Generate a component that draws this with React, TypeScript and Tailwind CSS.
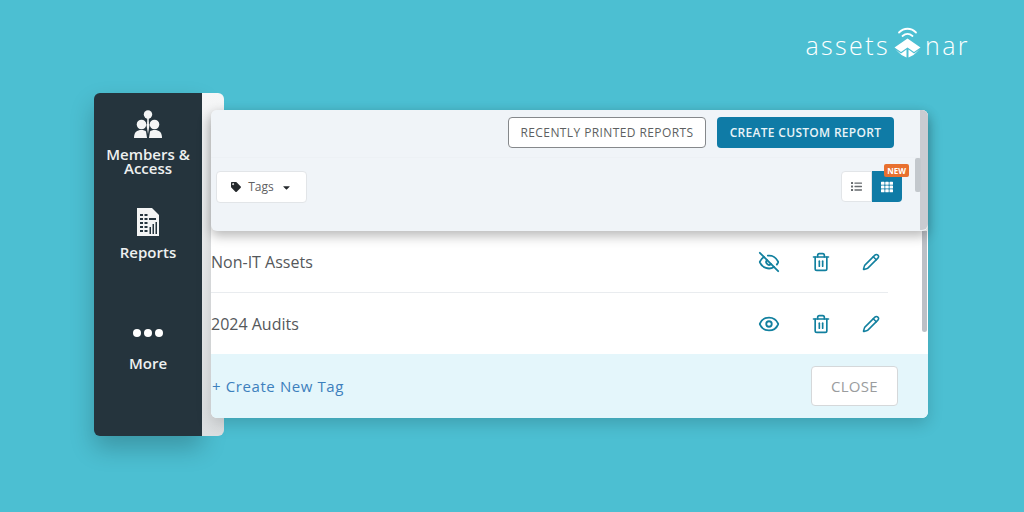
import React from "react";
import { Eye, EyeOff, Pencil, Trash2 } from "lucide-react";
import { FaCaretDown, FaList, FaTag, FaTh } from "react-icons/fa";

const font = "font-['Open_Sans',sans-serif]";

function LogoMark() {
  return (
    <svg width="27" height="34" viewBox="0 0 27 34" fill="none">
      <path d="M5 8.5C10 3.5 17 3.5 22 8.5" stroke="white" strokeWidth="1.8" strokeLinecap="round" />
      <path d="M8.5 12C11.5 9.5 15.5 9.5 18.5 12" stroke="white" strokeWidth="1.8" strokeLinecap="round" />
      <path d="M13.5 14.5L26.5 23.5L20 28L13.5 23.5L7 28L0.5 23.5Z" fill="white" />
      <path d="M1.5 25.5L7 29.5L12.5 25.5V33.5L7.5 31Z" fill="white" />
      <path d="M25.5 25.5L20 29.5L14.5 25.5V33.5L19.5 31Z" fill="white" />
    </svg>
  );
}

function MembersIcon() {
  return (
    <svg width="28" height="29" viewBox="0 0 28 29" fill="#f4f5f5">
      <circle cx="14" cy="4.5" r="4.2" />
      <rect x="13.2" y="8" width="1.6" height="5" />
      <circle cx="7.5" cy="14.5" r="4.8" />
      <circle cx="20.5" cy="14.5" r="4.8" />
      <path d="M0 28C0 22 3 20 7.5 20C9.5 20 11 20.500 12 21.500L13 28Z" />
      <path d="M28 28C28 22 25 20 20.500 20C18.500 20 17 20.500 16 21.500L15 28Z" />
      <path d="M14 11L15.500 15L14 24L12.500 15Z" />
    </svg>
  );
}

function ReportsIcon() {
  return (
    <svg width="22" height="28" viewBox="0 0 22 28">
      <path d="M0 0H15L22 7V28H0Z" fill="#f4f5f5" />
      <g fill="#25343d">
        <rect x="3" y="6" width="3" height="2" />
        <rect x="7.500" y="6" width="3" height="2" />
        <rect x="3" y="10" width="3" height="2" />
        <rect x="7.500" y="10" width="3" height="2" />
        <rect x="12" y="10" width="7" height="2" />
        <rect x="3" y="14" width="3" height="2" />
        <rect x="7.500" y="14" width="3" height="2" />
        <rect x="3" y="18" width="3" height="2" />
        <rect x="7.500" y="18" width="3" height="2" />
        <rect x="3" y="22" width="3" height="2" />
        <rect x="7.500" y="22" width="3" height="2" />
        <rect x="12.500" y="19" width="1.500" height="7" />
        <rect x="15.500" y="16" width="1.500" height="10" />
        <rect x="18.500" y="14" width="1.500" height="12" />
      </g>
    </svg>
  );
}

function Row({ label, hidden, divider }: { label: string; hidden?: boolean; divider?: boolean }) {
  return (
    <div className={`h-[62px] mr-[40px] flex items-center justify-between ${divider ? "border-b border-[#e9ecef]" : ""}`}>
      <span className="text-[16px] text-[#55585b] leading-none">{label}</span>
      <div className="flex items-center gap-[31px] mr-[8px] text-[#12809f]">
        {hidden ? <EyeOff size={22} strokeWidth={2} /> : <Eye size={22} strokeWidth={2} />}
        <Trash2 size={20} strokeWidth={2} />
        <Pencil size={18} strokeWidth={2} />
      </div>
    </div>
  );
}

export default function App() {
  return (
    <div className={`w-[1024px] h-[512px] bg-[#4cbfd2] overflow-hidden ${font}`}>
      {/* Logo */}
      <div className="h-[93px] pt-[23px] pr-[54px] flex justify-end items-start text-white">
        <div className="flex items-end h-[36px] text-[25px] font-light tracking-[2.4px] leading-none">
          <span className="pb-[1px]">assets</span>
          <span className="mx-[4px] mb-[1px]"><LogoMark /></span>
          <span className="pb-[1px]">nar</span>
        </div>
      </div>

      <div className="flex items-start pl-[94px]">
        {/* Sidebar */}
        <div className="w-[108px] h-[343px] bg-[#25343d] rounded-l-[6px] flex flex-col items-center text-[#eef0f0] text-[15px] font-semibold shadow-[0_12px_24px_rgba(0,0,0,0.22)]">
          <div className="mt-[17px]"><MembersIcon /></div>
          <div className="mt-[8px] text-center leading-[14px]">Members &<br />Access</div>
          <div className="mt-[33px]"><ReportsIcon /></div>
          <div className="mt-[6px] leading-[20px]">Reports</div>
          <div className="mt-[67px] flex gap-[3px]">
            <span className="w-[8px] h-[8px] rounded-full bg-white" />
            <span className="w-[8px] h-[8px] rounded-full bg-white" />
            <span className="w-[8px] h-[8px] rounded-full bg-white" />
          </div>
          <div className="mt-[16px] leading-[20px]">More</div>
        </div>
        <div className="w-[22px] h-[343px] rounded-r-[6px] bg-gradient-to-b from-[#f5f6f7] to-[#dcdfe1]" />

        {/* Main panel */}
        <div className="relative w-[717px] h-[308px] -ml-[13px] mt-[17px] rounded-[6px] bg-white shadow-[0_6px_16px_rgba(0,0,0,0.16)]">
          {/* Sticky header */}
          <div className="relative z-10 h-[121px] rounded-[6px] bg-[#f0f4f8] shadow-[0_5px_12px_rgba(0,0,0,0.28)]">
            <div className="h-[48px] pt-[7px] pr-[34px] flex justify-end gap-[11px] border-b border-[#edf1f5]">
              <button className="w-[198px] h-[31px] rounded-[4px] bg-white border border-[#85888b] text-[12px] tracking-[0.4px] text-[#5d5f61]">RECENTLY PRINTED REPORTS</button>
              <button className="w-[177px] h-[31px] rounded-[4px] bg-[#0f7ba6] text-[12px] font-semibold tracking-[0.3px] text-[#e8f4f8]">CREATE CUSTOM REPORT</button>
            </div>
            <div className="pl-[5px] pr-[26px] pt-[13px] flex justify-between items-start">
              <button className="w-[91px] h-[32px] rounded-[4px] bg-white border border-[#e2e5e8] flex items-center justify-center gap-[6px] text-[12px] text-[#5f6163]">
                <FaTag size={10} className="text-[#25292c]" />
                <span className="mx-[1px]">Tags</span>
                <FaCaretDown size={11} className="text-[#25292c]" />
              </button>
              <div className="relative flex h-[31px]">
                <div className="w-[31px] rounded-l-[4px] bg-white border border-[#e2e5e8] flex items-center justify-center text-[#666a6d]"><FaList size={11} /></div>
                <div className="w-[30px] rounded-r-[4px] bg-[#0f7ba6] flex items-center justify-center text-white"><FaTh size={12} /></div>
                <span className="absolute -top-[7px] -right-[7px] w-[25px] h-[13px] rounded-[2px] bg-[#e8702f] text-white text-[8px] font-bold leading-[13px] text-center">NEW</span>
              </div>
            </div>
            {/* Header scrollbars */}
            <div className="absolute top-0 right-0 w-[8px] h-[120px] rounded-r-[6px] bg-[#c9ccd1]" />
            <div className="absolute top-[48px] right-[7px] w-[6px] h-[34px] rounded-[2px] bg-[#c3c8cd]" />
          </div>

          {/* Tag list */}
          <div className="relative h-[123px] overflow-hidden">
            <Row label="Non-IT Assets" hidden divider />
            <Row label="2024 Audits" />
            <div className="absolute top-0 right-[1px] w-[5px] h-[101px] rounded-b-[3px] bg-[#bcc0c6]" />
          </div>

          {/* Footer */}
          <div className="h-[64px] rounded-b-[6px] bg-[#e4f6fb] pl-[1px] pr-[30px] flex items-center justify-between">
            <span className="text-[15px] tracking-[0.6px] text-[#3d80bd]">+ Create New Tag</span>
            <button className="w-[87px] h-[40px] rounded-[4px] bg-white border border-[#d5d8da] text-[15px] tracking-[0.3px] text-[#9a9c9e]">CLOSE</button>
          </div>
        </div>
      </div>
    </div>
  );
}
